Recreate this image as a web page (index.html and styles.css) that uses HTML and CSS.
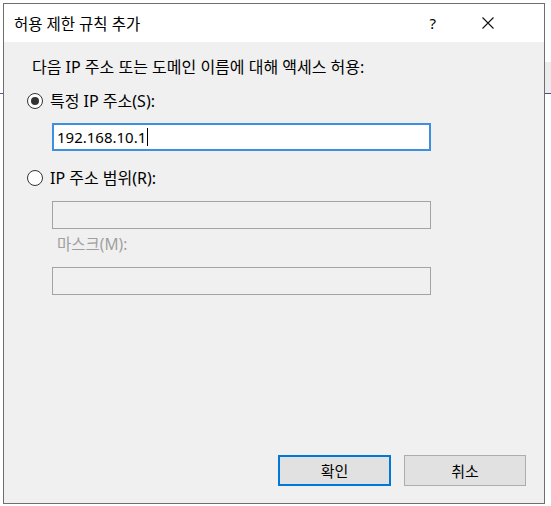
FILE: index.html
```html
<!DOCTYPE html>
<html lang="ko">
<head>
  <meta charset="UTF-8" />
  <title>허용 제한 규칙 추가</title>
  <link rel="stylesheet" href="styles.css">
</head>
<body>
  <span class="bg-bit bg-left"></span>
  <span class="bg-bit bg-right"></span>

  <div class="dialog">
    <div class="titlebar">
      <span class="title">허용 제한 규칙 추가</span>
      <span class="help">?</span>
      <svg class="close" width="12" height="12" viewBox="0 0 12 12">
        <path d="M0.5 0.5 L11.5 11.5 M11.5 0.5 L0.5 11.5" stroke="#111" stroke-width="1.1" fill="none" />
      </svg>
    </div>

    <div class="content">
      <div class="intro">다음 IP 주소 또는 도메인 이름에 대해 액세스 허용:</div>

      <label class="radio-row first">
        <span class="radio checked"></span>
        <span>특정 IP 주소(S):</span>
      </label>
      <div class="textbox focused">192.168.10.1<span class="caret"></span></div>

      <label class="radio-row second">
        <span class="radio"></span>
        <span>IP 주소 범위(R):</span>
      </label>
      <div class="textbox disabled range"></div>
      <div class="mask-label">마스크(M):</div>
      <div class="textbox disabled mask"></div>

      <div class="buttons">
        <button class="btn default">확인</button>
        <button class="btn cancel">취소</button>
      </div>
    </div>
  </div>
</body>
</html>
```

FILE: styles.css
```css
body { margin: 0; background: #fff; font-family: "Noto Sans", "Noto Sans CJK KR", sans-serif; font-size: 16px; color: #000; }

/* bits of the window behind the dialog */
.bg-bit { position: absolute; }
.bg-left { left: 0; top: 93px; width: 3px; height: 1px; background: #4a5ca8; }
.bg-right { left: 545px; top: 62px; width: 6px; height: 31px; background: #ececec; border-bottom: 1px solid #4a4f8a; }

.dialog { position: relative; margin: 3px 0 0 3px; width: 540px; height: 499px; border: 1px solid #6f6f6f; background: #f0f0f0; display: flex; flex-direction: column; }

.titlebar { height: 38px; background: #fff; display: flex; align-items: center; padding-left: 10px; }
.title { flex: 1; font-size: 15.5px; }
.help { font-size: 15px; margin-right: 46px; }
.close { margin-right: 50px; }

.content { flex: 1; display: flex; flex-direction: column; padding: 15px 18px 17px 0; }
.intro { margin-left: 28px; line-height: 20px; }

.radio-row { display: flex; align-items: center; margin-left: 23px; line-height: 20px; }
.radio-row.first { margin-top: 14px; }
.radio-row.second { margin-top: 17px; }
.radio { width: 14px; height: 14px; border: 1px solid #333; border-radius: 50%; background: #fff; margin-right: 7px; display: flex; align-items: center; justify-content: center; }
.radio.checked::after { content: ""; width: 8px; height: 8px; border-radius: 50%; background: #333; }

.textbox { margin-left: 48px; width: 372px; height: 24px; line-height: 24px; padding-left: 3px; font-size: 15px; box-sizing: content-box; }
.textbox.focused { margin-top: 12px; border: 2px solid #3d8fe0; background: #fff; }
.textbox.disabled { width: 377px; height: 26px; padding: 0; border: 1px solid #a3a3a3; background: #f0f0f0; }
.textbox.range { margin-top: 13px; }
.textbox.mask { margin-top: 13px; }
.caret { display: inline-block; width: 1px; height: 18px; background: #000; vertical-align: -3px; margin-left: 1px; }

.mask-label { margin: 5px 0 0 53px; line-height: 20px; font-size: 15.5px; color: #a0a0a0; }

.buttons { margin-top: auto; display: flex; justify-content: flex-end; gap: 13px; }
.btn { font-family: inherit; font-size: 15px; height: 31px; background: #e1e1e1; border: 1px solid #adadad; padding: 0; color: #000; }
.btn.default { width: 113px; border: 2px solid #0078d7; }
.btn.cancel { width: 122px; }
```
